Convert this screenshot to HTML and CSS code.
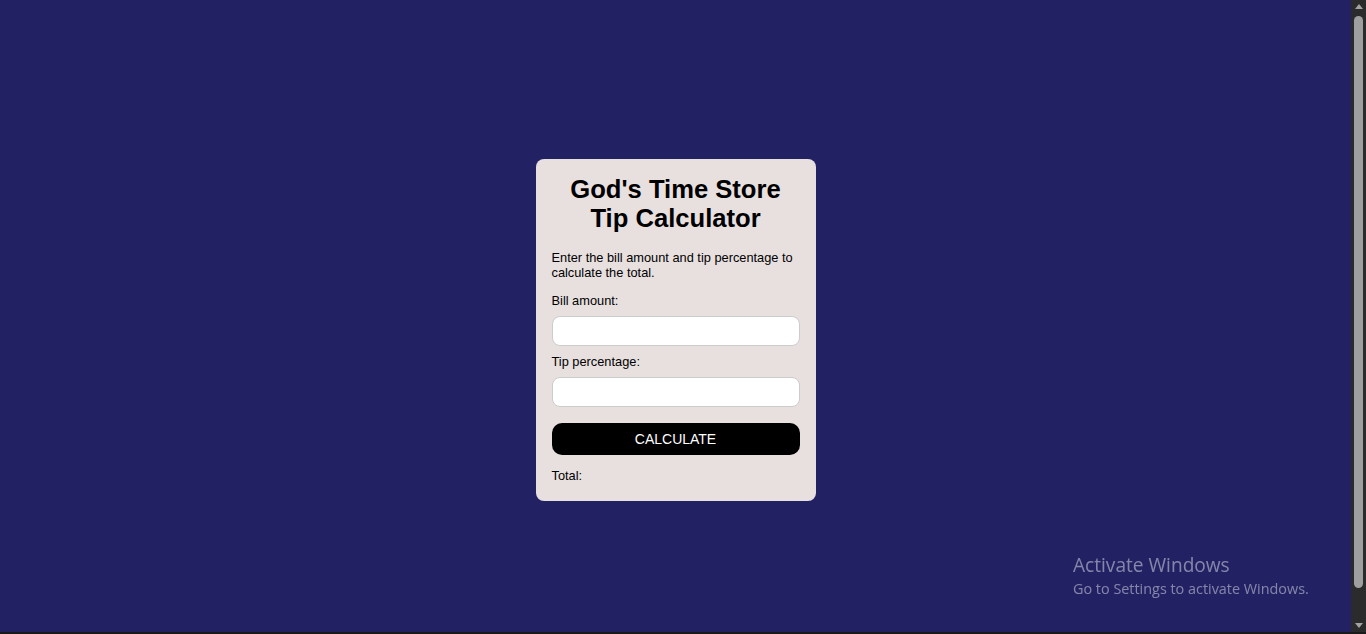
FILE: index.html
```html
<!DOCTYPE html>
<html lang="en">
<head>
<meta charset="utf-8">
<title>God's Time Store Tip Calculator</title>
<link rel="stylesheet" href="styles.css">
</head>
<body>
<div class="screen">
  <main class="viewport">
    <div class="card">
      <h1 class="title">God's Time Store<br>Tip Calculator</h1>
      <p class="intro">Enter the bill amount and tip percentage to calculate the total.</p>
      <label class="field-label" for="bill">Bill amount:</label>
      <input class="field bill" id="bill" type="text">
      <label class="field-label tip-label" for="tip">Tip percentage:</label>
      <input class="field tip" id="tip" type="text">
      <button class="calc-btn" type="button">CALCULATE</button>
      <p class="total">Total:</p>
    </div>
  </main>
  <div class="scrollbar">
    <span class="arrow up"></span>
    <span class="track"><span class="thumb"></span></span>
    <span class="arrow down"></span>
  </div>
</div>
<div class="bottom-line"></div>
<div class="watermark">
  <div class="wm-title">Activate Windows</div>
  <div class="wm-sub">Go to Settings to activate Windows.</div>
</div>
</body>
</html>
```
FILE: styles.css
```css
* { box-sizing: border-box; }
html, body {
  margin: 0;
  height: 634px;
  overflow: hidden;
  background: #212163;
  font-family: "Liberation Sans", Arial, sans-serif;
}
.screen {
  display: flex;
  height: 632px;
}
.viewport {
  flex: 1;
  display: flex;
  justify-content: center;
  align-items: flex-start;
  padding-top: 159px;
}
.card {
  width: 280px;
  padding: 16px 16px 18px;
  background: #e8dfdf;
  border-radius: 8px;
  color: #000;
}
.title {
  margin: 0 0 17px;
  font-size: 25.6px;
  line-height: 29px;
  font-weight: bold;
  text-align: center;
}
.intro {
  margin: 0 0 13px;
  font-size: 12.8px;
  line-height: 15px;
}
.field-label {
  display: block;
  margin: 0 0 8px;
  font-size: 12.8px;
  line-height: 15px;
}
.field {
  display: block;
  width: 248px;
  height: 30px;
  margin: 0 0 8px;
  border: 1px solid #cccccc;
  border-radius: 8px;
  background: #fff;
  font: 13px "Liberation Sans", Arial, sans-serif;
}
.field.tip { margin-bottom: 16px; }
.calc-btn {
  display: block;
  width: 248px;
  height: 32px;
  margin: 0 0 13px;
  border: none;
  border-radius: 10px;
  background: #000;
  color: #fff;
  font: 14px/32px "Liberation Sans", Arial, sans-serif;
  padding: 0;
}
.total {
  margin: 0;
  font-size: 12.8px;
  line-height: 15px;
}
.scrollbar {
  width: 15px;
  background: #2b2b2b;
  display: flex;
  flex-direction: column;
  align-items: center;
}
.arrow {
  width: 0;
  height: 0;
  border-left: 4px solid transparent;
  border-right: 4px solid transparent;
}
.arrow.up {
  margin-top: 4px;
  border-bottom: 5px solid #a3a3a3;
}
.arrow.down {
  margin-bottom: 4px;
  border-top: 5px solid #a3a3a3;
}
.track {
  flex: 1;
  width: 100%;
  display: flex;
  justify-content: center;
  padding-top: 7px;
}
.thumb {
  width: 9px;
  height: 572px;
  border-radius: 5px;
  background: #9f9f9f;
}
.bottom-line {
  height: 2px;
  background: #1a1a1a;
}
.watermark {
  position: fixed;
  left: 1073px;
  top: 553px;
  color: rgba(255, 255, 255, 0.45);
  font-family: "Open Sans", "Noto Sans", sans-serif;
}
.wm-title {
  font-size: 19.1px;
  line-height: 25px;
}
.wm-sub {
  font-size: 14.4px;
  line-height: 21px;
}
```
